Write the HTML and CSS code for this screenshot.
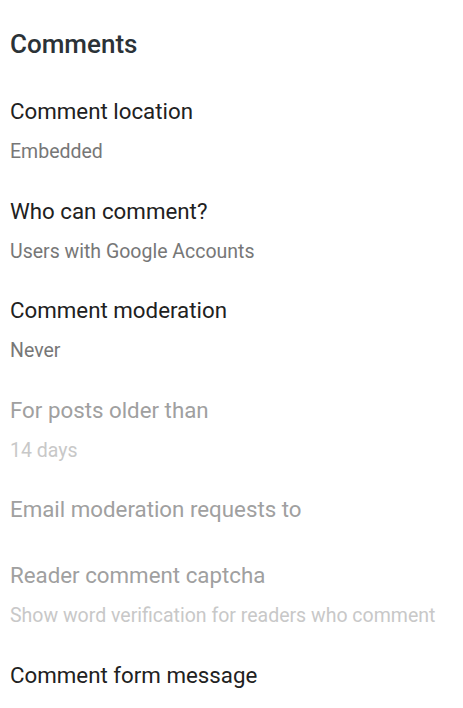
FILE: index.html
```html
<!DOCTYPE html>
<html>
<head>
<meta charset="utf-8">
<link rel="stylesheet" href="styles.css">
</head>
<body>
<div class="page">
  <h1 class="heading">Comments</h1>
  <div class="list">
    <div class="item">
      <div class="title">Comment location</div>
      <div class="sub">Embedded</div>
    </div>
    <div class="item">
      <div class="title">Who can comment?</div>
      <div class="sub">Users with Google Accounts</div>
    </div>
    <div class="item">
      <div class="title">Comment moderation</div>
      <div class="sub">Never</div>
    </div>
    <div class="item disabled">
      <div class="title">For posts older than</div>
      <div class="sub">14 days</div>
    </div>
    <div class="item disabled single">
      <div class="title">Email moderation requests to</div>
    </div>
    <div class="item disabled">
      <div class="title">Reader comment captcha</div>
      <div class="sub">Show word verification for readers who comment</div>
    </div>
    <div class="item">
      <div class="title">Comment form message</div>
    </div>
  </div>
</div>
</body>
</html>
```
FILE: styles.css
```css
html, body {
  margin: 0;
  padding: 0;
  background: #ffffff;
}
.page {
  font-family: Roboto, "Noto Sans", sans-serif;
  padding: 26px 10px 0 10px;
}
.heading {
  margin: 0;
  font-size: 26px;
  font-weight: 500;
  line-height: 36px;
  color: #2b3237;
}
.list {
  display: flex;
  flex-direction: column;
  padding-top: 26px;
}
.item {
  display: flex;
  flex-direction: column;
  gap: 13px;
  padding: 8px 0 22.5px;
}
.item.single {
  padding-bottom: 28px;
}
.title {
  font-size: 22.3px;
  line-height: 30px;
  color: #212121;
}
.sub {
  font-size: 19.5px;
  line-height: 26px;
  color: #777777;
}
.disabled .title {
  color: #a0a0a0;
}
.disabled .sub {
  color: #c8c8c8;
}
```
